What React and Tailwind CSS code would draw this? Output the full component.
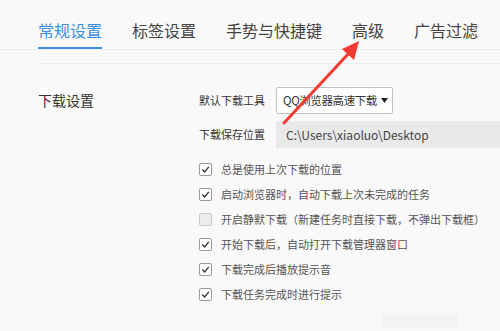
import React from 'react';

const tabs = ['常规设置', '标签设置', '手势与快捷键', '高级', '广告过滤'];

const options = [
  { label: '总是使用上次下载的位置', checked: true },
  { label: '启动浏览器时，自动下载上次未完成的任务', checked: true },
  { label: '开启静默下载（新建任务时直接下载，不弹出下载框）', checked: false },
  { label: '开始下载后，自动打开下载管理器窗口', checked: true },
  { label: '下载完成后播放提示音', checked: true },
  { label: '下载任务完成时进行提示', checked: true },
];

function Checkbox({ checked }) {
  if (!checked) {
    return <span className="h-[13px] w-[13px] shrink-0 rounded-[2px] border border-[#c9c9c9] bg-[#ececec]" />;
  }
  return (
    <span className="flex h-[13px] w-[13px] shrink-0 items-center justify-center rounded-[2px] border border-[#9a9a9a] bg-white">
      <svg width="9" height="9" viewBox="0 0 9 9" fill="none">
        <path d="M1.3 4.6 L3.6 6.9 L7.8 1.9" stroke="#333" strokeWidth="1.4" />
      </svg>
    </span>
  );
}

function Arrow() {
  return (
    <svg className="pointer-events-none absolute left-0 top-0" width="500" height="331" viewBox="0 0 500 331">
      <line x1="284" y1="123" x2="350" y2="52" stroke="#f23a35" strokeWidth="3" strokeLinecap="round" />
      <polygon points="359,41 354,60 342,49" fill="#f23a35" />
    </svg>
  );
}

export default function App() {
  return (
    <div className="relative h-[331px] w-[500px] overflow-hidden bg-[#f9f9f9] font-['Noto_Sans_CJK_SC',sans-serif]">
      <div className="flex h-[50px] gap-[30px] border-b border-[#ececec] pl-[38px]">
        {tabs.map((t, i) => (
          <div
            key={t}
            className={
              i === 0
                ? 'flex h-full items-center whitespace-nowrap border-b-[2px] border-[#3b8fe3] pt-[12px] text-[16px] leading-none text-[#3b8fe3]'
                : 'flex h-full items-center whitespace-nowrap border-b-[2px] border-transparent pt-[12px] text-[16px] leading-none text-[#444]'
            }
          >
            {t}
          </div>
        ))}
      </div>

      <div className="ml-[38px] mt-[13px] border-t border-[#ececec] pt-[23px]">
        <div className="flex items-start">
          <div className="w-[161px] text-[14px] leading-[27px] text-[#333]">下载设置</div>
          <div className="flex flex-1 flex-col">
            <div className="flex items-center">
              <span className="w-[77px] text-[11px] text-[#333]">默认下载工具</span>
              <div className="flex h-[27px] w-[117px] items-center gap-[4px] rounded-[2px] border border-[#c2c2c2] bg-white pl-[6px] text-[11.5px] text-[#333]">
                <span className="whitespace-nowrap tracking-[-0.4px]">QQ浏览器高速下载</span>
                <svg width="7" height="5" viewBox="0 0 7 5" className="shrink-0">
                  <polygon points="0,0 7,0 3.5,5" fill="#222" />
                </svg>
              </div>
            </div>
            <div className="mt-[7px] flex items-center">
              <span className="w-[77px] text-[11px] text-[#333]">下载保存位置</span>
              <div className="flex h-[27px] flex-1 items-center whitespace-nowrap bg-[#e9e9e9] pl-[10px] text-[12px] text-[#444]">
                C:\Users\xiaoluo\Desktop
              </div>
            </div>
            <div className="mt-[9px] flex flex-col">
              {options.map((o) => (
                <div key={o.label} className="flex h-[25px] items-center gap-[9px]">
                  <Checkbox checked={o.checked} />
                  <span className="whitespace-nowrap text-[11px] text-[#555]">{o.label}</span>
                </div>
              ))}
            </div>
            <div className="ml-[183px] mt-[6px] h-[15px] w-[76px] bg-[#f3f3f3]" />
          </div>
        </div>
        <div className="mt-[12px] ml-[2px] border-t border-[#ededed]" />
      </div>

      <Arrow />
    </div>
  );
}
